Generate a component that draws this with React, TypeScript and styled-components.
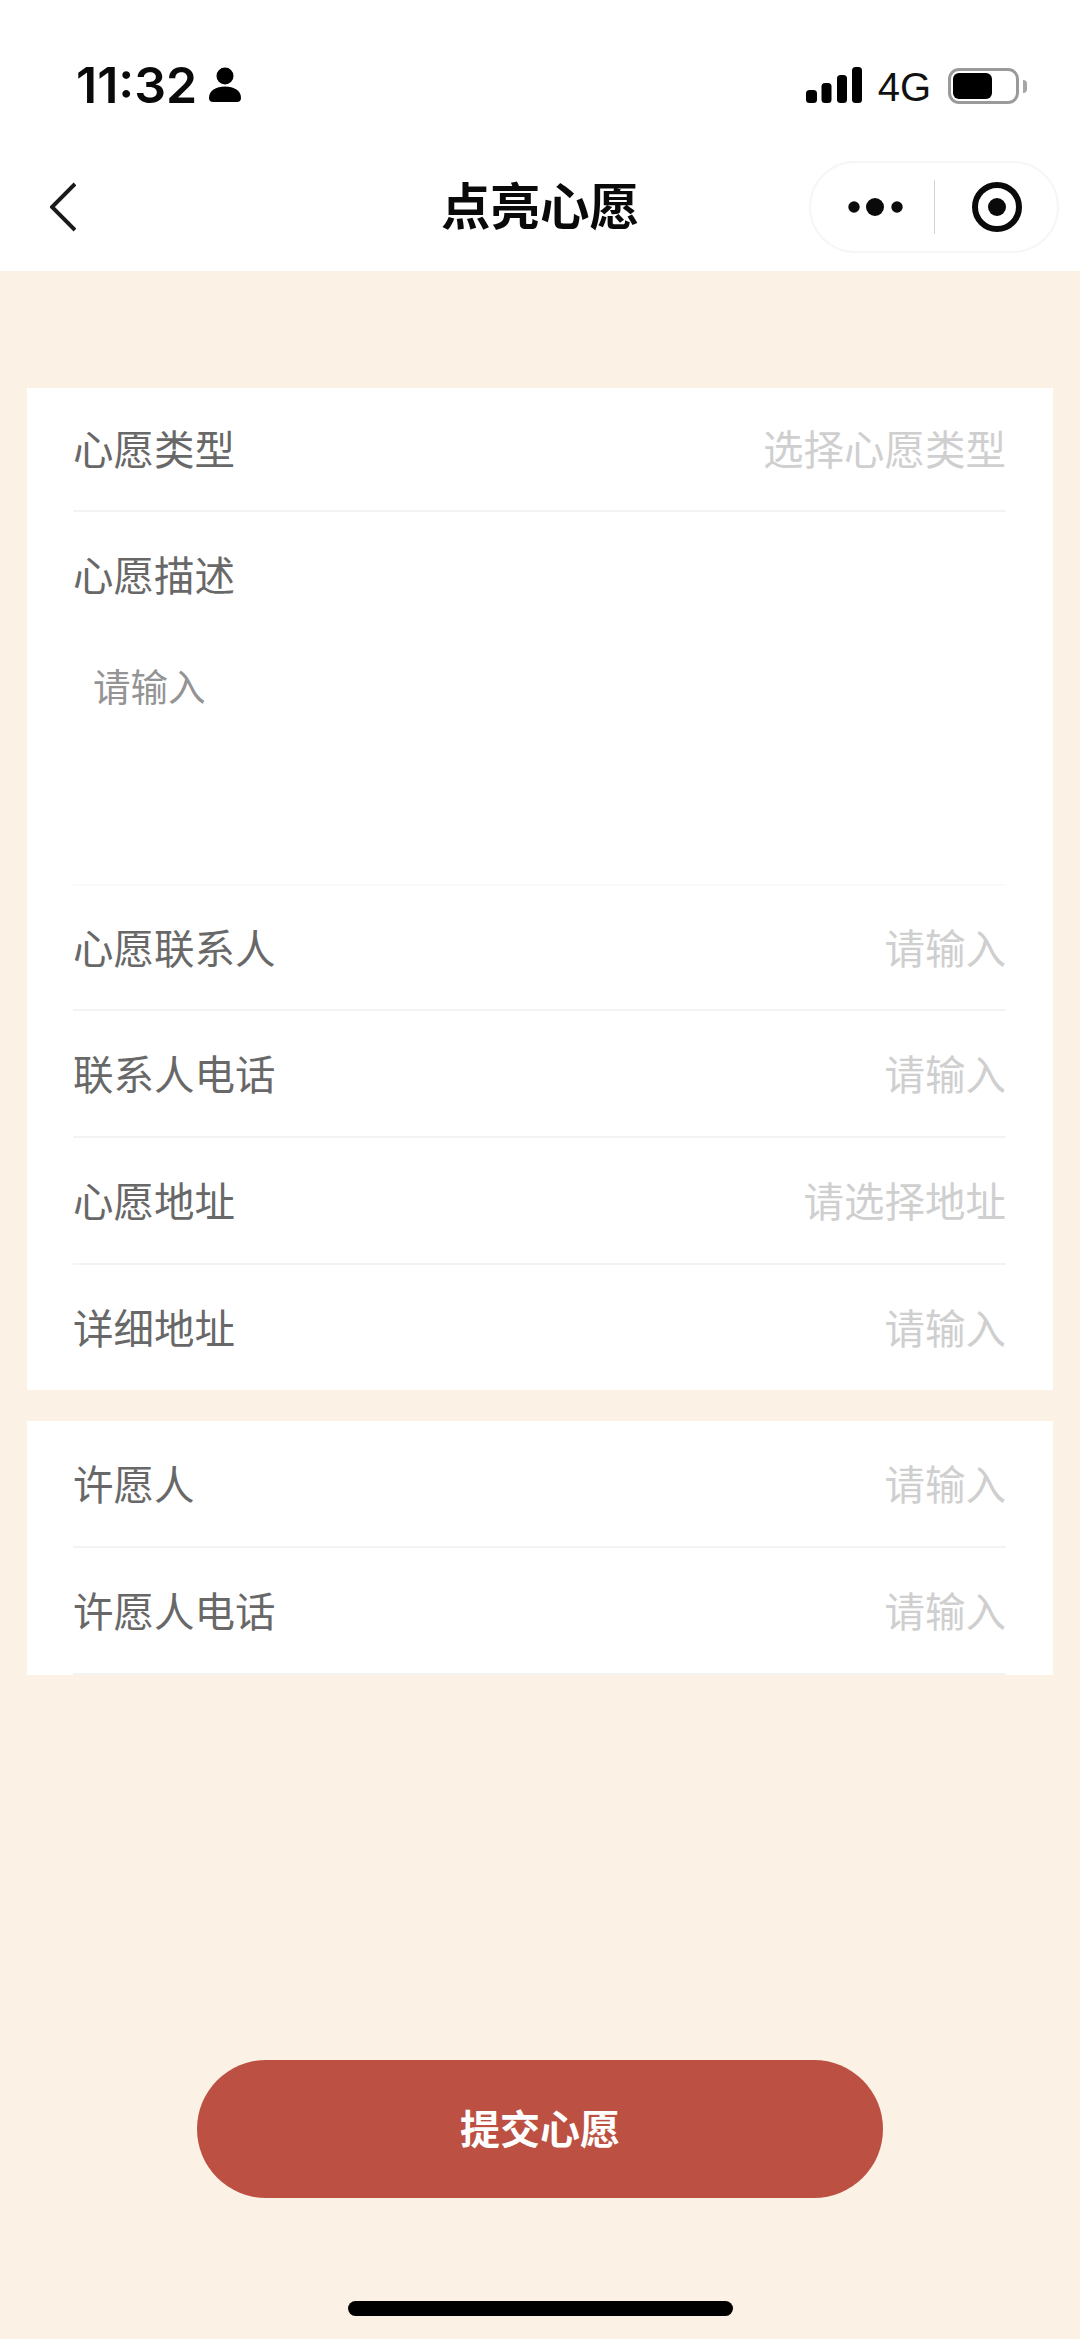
import React from "react";
import styled, { createGlobalStyle } from "styled-components";

const Global = createGlobalStyle`
  html, body { margin: 0; padding: 0; background: #fcf1e5; }
  * { box-sizing: border-box; }
  body { font-family: "Noto Sans CJK SC", "Noto Sans", sans-serif; }
`;
const Page = styled.div`
  width: 1080px; height: 2339px; display: flex; flex-direction: column;
  background: #fcf1e5; overflow: hidden;
`;
const Header = styled.header`
  height: 271px; background: #fff; display: flex; flex-direction: column; flex: none;
`;
const StatusBar = styled.div`
  height: 145px; padding: 64px 61px 0 76px; display: flex; justify-content: space-between; align-items: flex-start;
`;
const TimeGroup = styled.div`
  display: flex; align-items: center; gap: 12px; height: 42px;
`;
const Time = styled.span`
  font: 600 50px/42px Inter, "Liberation Sans", sans-serif; color: #0a0a0a; letter-spacing: 0;
`;
const StatusIcons = styled.div`
  display: flex; align-items: center; height: 42px;
`;
const Network = styled.span`
  font: 400 40px/42px "Liberation Sans", Inter, sans-serif; color: #111; margin: 4px 17px 0 16px;
`;
const Battery = styled.div`
  width: 71px; height: 36px; border: 3px solid #9a9a9a; border-radius: 11px; padding: 2px; position: relative; margin-top: 2px;
  &::after {
    content: ""; position: absolute; right: -11px; top: 9px; width: 4px; height: 13px;
    background: #a5a5a5; border-radius: 0 4px 4px 0;
  }
`;
const BatteryFill = styled.div`
  width: 39px; height: 100%; background: #000; border-radius: 6px;
`;
const Nav = styled.nav`
  height: 126px; padding: 0 21px 0 50px; display: flex; align-items: center; position: relative;
`;
const Title = styled.h1`
  position: absolute; left: 0; right: 0; top: 0; bottom: 10px; margin: 0; display: flex; align-items: center; justify-content: center;
  font-size: 49.5px; font-weight: 700; color: #0a0a0a;
`;
const Back = styled.svg`
  width: 26px; height: 50px; margin-bottom: 2px; display: block;
`;
const Capsule = styled.div`
  margin-left: auto; margin-bottom: 2px; width: 250px; height: 92px; border: 2px solid #f6f6f6; border-radius: 46px; background: #fff;
  display: flex; align-items: center; position: relative; z-index: 1;
`;
const CapsuleSide = styled.div<{ $width: number; $shift: number }>`
  flex: none; width: ${(p) => p.$width}px; display: flex; align-items: center; justify-content: center; padding-left: ${(p) => p.$shift}px;
`;
const CapsuleDivider = styled.div`
  width: 1px; height: 54px; background: #d2d2d2; flex: none;
`;
const Main = styled.main`
  flex: 1; padding: 117px 27px 0; display: flex; flex-direction: column; position: relative;
`;
const Card = styled.section<{ $gap?: number }>`
  background: #fff; padding: 0 47px 0 46px; margin-bottom: ${(p) => p.$gap ?? 0}px;
`;
const Row = styled.div<{ $h: number; $line?: boolean }>`
  height: ${(p) => p.$h}px; display: flex; align-items: center; justify-content: space-between;
  border-bottom: ${(p) => (p.$line ? "2px solid #f3f3f3" : "none")};
`;
const Label = styled.span`
  font-size: 40.5px; line-height: 54px; margin-bottom: 2px; color: #686868; font-weight: 400;
`;
const Hint = styled.span`
  font-size: 40.5px; line-height: 54px; margin-bottom: 2px; color: #cfcfcf; font-weight: 400;
`;
const Description = styled.div`
  height: 374px; border-bottom: 2px solid #fafafa; display: flex; flex-direction: column; align-items: flex-start; padding-top: 35px;
`;
const DescriptionInput = styled.span`
  margin: 56px 0 0 20px; font-size: 37.5px; line-height: 52px; color: #949494;
`;
const Spacer = styled.div`
  flex: 1;
`;
const Submit = styled.button`
  align-self: center; width: 686px; height: 138px; border: 0; border-radius: 69px; background: #bc5143; color: #fff;
  font-family: inherit; font-size: 40px; font-weight: 700; line-height: 54px; margin-bottom: 141px; padding: 0 0 4px;
`;
const HomeBar = styled.div`
  position: absolute; left: 348px; bottom: 23px; width: 385px; height: 15px; border-radius: 8px; background: #000;
`;

const rowsA = [
  ["心愿联系人", "请输入", 125],
  ["联系人电话", "请输入", 127],
  ["心愿地址", "请选择地址", 127],
] as const;

export default function App() {
  return (
    <Page>
      <Global />
      <Header>
        <StatusBar>
          <TimeGroup>
            <Time>11:32</Time>
            <svg width="32" height="36" viewBox="0 0 32 36" fill="#000">
              <circle cx="16" cy="9" r="8.5" />
              <path d="M0 31c0-7.5 7-11.5 16-11.5S32 23.500 32 31c0 2.500-1.500 4-4 4H4c-2.500 0-4-1.500-4-4z" />
            </svg>
          </TimeGroup>
          <StatusIcons>
            <svg width="56" height="36" viewBox="0 0 56 36" fill="#000">
              <rect x="0" y="23" width="11" height="13" rx="3.500" />
              <rect x="15.500" y="16" width="10" height="20" rx="3.500" />
              <rect x="31" y="8" width="10" height="28" rx="3.500" />
              <rect x="46" y="0" width="10" height="36" rx="3.500" />
            </svg>
            <Network>4G</Network>
            <Battery><BatteryFill /></Battery>
          </StatusIcons>
        </StatusBar>
        <Nav>
          <Back viewBox="0 0 26 50" fill="none" stroke="#1a1a1a" strokeWidth="4">
            <path d="M25 2 2 25l23 23" />
          </Back>
          <Title>点亮心愿</Title>
          <Capsule>
            <CapsuleSide $width={123} $shift={12}>
              <svg width="64" height="20" viewBox="0 0 64 20" fill="#0a0a0a">
                <circle cx="7" cy="10" r="5.700" />
                <circle cx="28" cy="10" r="9" />
                <circle cx="50" cy="10" r="5.700" />
              </svg>
            </CapsuleSide>
            <CapsuleDivider />
            <CapsuleSide $width={122} $shift={2}>
              <svg width="52" height="52" viewBox="0 0 52 52" fill="none">
                <circle cx="26" cy="26" r="22" stroke="#0a0a0a" strokeWidth="6" />
                <circle cx="26" cy="26" r="9" fill="#0a0a0a" />
              </svg>
            </CapsuleSide>
          </Capsule>
        </Nav>
      </Header>
      <Main>
        <Card $gap={31}>
          <Row $h={124} $line>
            <Label>心愿类型</Label>
            <Hint>选择心愿类型</Hint>
          </Row>
          <Description>
            <Label>心愿描述</Label>
            <DescriptionInput>请输入</DescriptionInput>
          </Description>
          {rowsA.map(([l, h, height]) => (
            <Row key={l} $h={height} $line>
              <Label>{l}</Label>
              <Hint>{h}</Hint>
            </Row>
          ))}
          <Row $h={125}>
            <Label>详细地址</Label>
            <Hint>请输入</Hint>
          </Row>
        </Card>
        <Card>
          <Row $h={127} $line>
            <Label>许愿人</Label>
            <Hint>请输入</Hint>
          </Row>
          <Row $h={127} $line>
            <Label>许愿人电话</Label>
            <Hint>请输入</Hint>
          </Row>
        </Card>
        <Spacer />
        <Submit>提交心愿</Submit>
        <HomeBar />
      </Main>
    </Page>
  );
}
